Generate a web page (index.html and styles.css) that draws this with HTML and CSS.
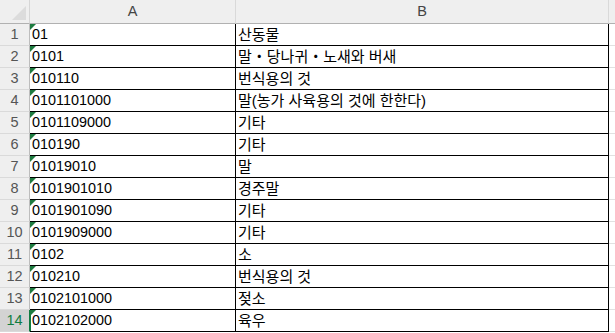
FILE: index.html
```html
<!DOCTYPE html>
<html lang="ko">
<head>
<meta charset="utf-8">
<title>Sheet</title>
<link rel="stylesheet" href="styles.css">
</head>
<body>
<div class="sheet">
  <div class="corner"><span class="corner-tri"></span></div>
  <div class="colhead">A</div>
  <div class="colhead">B</div>
  <div class="colhead colhead-c"></div>

  <div class="rowhead">1</div><div class="cell a"><span class="flag"></span>01</div><div class="cell b">산동물</div><div class="cell c"></div>
  <div class="rowhead">2</div><div class="cell a"><span class="flag"></span>0101</div><div class="cell b">말・당나귀・노새와 버새</div><div class="cell c"></div>
  <div class="rowhead">3</div><div class="cell a"><span class="flag"></span>010110</div><div class="cell b">번식용의 것</div><div class="cell c"></div>
  <div class="rowhead">4</div><div class="cell a"><span class="flag"></span>0101101000</div><div class="cell b">말(농가 사육용의 것에 한한다)</div><div class="cell c"></div>
  <div class="rowhead">5</div><div class="cell a"><span class="flag"></span>0101109000</div><div class="cell b">기타</div><div class="cell c"></div>
  <div class="rowhead">6</div><div class="cell a"><span class="flag"></span>010190</div><div class="cell b">기타</div><div class="cell c"></div>
  <div class="rowhead">7</div><div class="cell a"><span class="flag"></span>01019010</div><div class="cell b">말</div><div class="cell c"></div>
  <div class="rowhead">8</div><div class="cell a"><span class="flag"></span>0101901010</div><div class="cell b">경주말</div><div class="cell c"></div>
  <div class="rowhead">9</div><div class="cell a"><span class="flag"></span>0101901090</div><div class="cell b">기타</div><div class="cell c"></div>
  <div class="rowhead">10</div><div class="cell a"><span class="flag"></span>0101909000</div><div class="cell b">기타</div><div class="cell c"></div>
  <div class="rowhead">11</div><div class="cell a"><span class="flag"></span>0102</div><div class="cell b">소</div><div class="cell c"></div>
  <div class="rowhead">12</div><div class="cell a"><span class="flag"></span>010210</div><div class="cell b">번식용의 것</div><div class="cell c"></div>
  <div class="rowhead">13</div><div class="cell a"><span class="flag"></span>0102101000</div><div class="cell b">젖소</div><div class="cell c"></div>
  <div class="rowhead rowhead-sel">14</div><div class="cell a cell-sel"><span class="flag"></span>0102102000</div><div class="cell b">육우</div><div class="cell c"></div>
</div>
</body>
</html>
```

FILE: styles.css
```css
* { box-sizing: border-box; }
html, body { margin: 0; padding: 0; background: #fff; }
body { width: 615px; height: 333px; overflow: hidden; }

.sheet {
  display: grid;
  grid-template-columns: 30px 206px 373px 1fr;
  grid-template-rows: 24px;
  grid-auto-rows: 22px;
  font-family: "Liberation Sans", "Noto Sans CJK KR", sans-serif;
}

.corner {
  position: relative;
  background: #efefef;
  border-bottom: 1px solid #b1b1b1;
  border-right: 1px solid #d6d6d6;
}
.corner-tri {
  position: absolute;
  right: 3px;
  bottom: 3px;
  width: 0;
  height: 0;
  border-left: 14px solid transparent;
  border-bottom: 14px solid #dcdcdc;
}

.colhead {
  background: #efefef;
  border-bottom: 1px solid #b1b1b1;
  border-right: 1px solid #d9d9d9;
  color: #444;
  font-size: 14.5px;
  line-height: 23px;
  text-align: center;
}
.colhead-c { border-right: none; }

.rowhead {
  background: #efefef;
  border-bottom: 1px solid #dadada;
  border-right: 1px solid #bdbdbd;
  color: #555;
  font-size: 14.5px;
  line-height: 21px;
  text-align: center;
}
.rowhead-sel {
  background: #d3d3d3;
  color: #107c41;
  border-right: 1px solid #107c41;
}

.cell {
  position: relative;
  border-bottom: 1px solid #000;
  border-right: 1px solid #000;
  color: #000;
  white-space: nowrap;
  overflow: hidden;
  line-height: 21px;
  padding-left: 2px;
}
.a { font-size: 14.4px; }
.b { font-size: 15px; }
.c { border-bottom: 1px solid #e1e1e1; border-right: none; }
.cell-sel { box-shadow: inset 1px 0 0 #107c41; }

.flag {
  position: absolute;
  left: 0;
  top: 0;
  width: 0;
  height: 0;
  border-top: 6px solid #1d7b3f;
  border-right: 6px solid transparent;
}
```
